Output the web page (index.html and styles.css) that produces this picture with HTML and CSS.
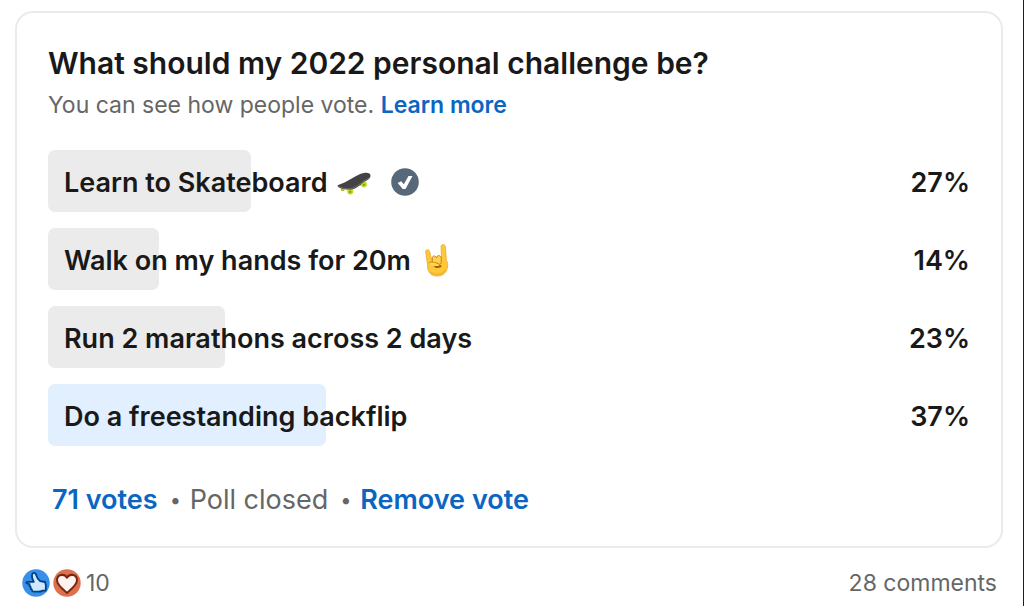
FILE: index.html
```html
<!DOCTYPE html>
<html lang="en">
<head>
  <meta charset="UTF-8">
  <meta name="viewport" content="width=device-width, initial-scale=1.0">
  <title>Poll results</title>
  <link rel="stylesheet" href="styles.css">
</head>
<body>
  <section class="poll">
    <h1>What should my 2022 personal challenge be?</h1>
    <p class="note">You can see how people vote. <a href="#">Learn more</a></p>

    <ul class="options">
      <li class="option">
        <div class="bar" style="width: 22%"></div>
        <span class="label">Learn to Skateboard</span>
        <svg class="emoji" viewBox="0 0 36 36" role="img" aria-label="Skateboard">
          <circle cx="6" cy="25.500" r="2.300" fill="#a9c41c"/>
          <circle cx="14" cy="28" r="3.200" fill="#b9dc20"/>
          <circle cx="24" cy="20" r="2" fill="#a9c41c"/>
          <circle cx="28.500" cy="20.500" r="3.200" fill="#b9dc20"/>
          <path d="M1 21.500c2-1.500 5-2 8-3.500 5-2.500 10-6 15-8.200 4-1.600 8-2.200 10.300-.8 2 1.500 1.200 4.500-.8 6-2 1.400-4 2-6.500 4-4 3.200-7 6.500-12 7-5 .3-10-.7-13-2.200-1.400-.7-1.800-1.700-1-2.300z" fill="#434345"/>
          <path d="M1 22.500c3 2 8.500 3 13 2.600 6-.6 9-4.600 14-7.800 3-2 5.500-2 6.500-4.500" fill="none" stroke="#8f7a6c" stroke-width=".8"/>
          <circle cx="14" cy="28.500" r="1.200" fill="#849c1a"/>
          <circle cx="28.500" cy="21" r="1.200" fill="#849c1a"/>
        </svg>
        <svg class="check" viewBox="0 0 28 28" role="img" aria-label="Your vote">
          <circle cx="14" cy="14" r="13.800" fill="#56687a"/>
          <path d="M6.700 15l3.500-1.800 2.600 3L17.500 8h4L14.500 21h-2.800z" fill="#fff"/>
        </svg>
        <span class="percent">27%</span>
      </li>
      <li class="option">
        <div class="bar" style="width: 12%"></div>
        <span class="label">Walk on my hands for 20m</span>
        <svg class="emoji" viewBox="0 0 36 36" role="img" aria-label="Sign of the horns">
          <path d="M8 23L6 9.500C5.600 6.800 9.600 6.300 10.200 9l2 8.500 10.600-1L22.300 4c-.2-3 4.300-3.200 4.500-.2L28 18.500c1.200 2 1.800 4.500 1 7.500C28 31.500 24 35 18 35c-6.500 0-9.500-4-10-9.500z" fill="#fdc93b" stroke="#eba329" stroke-width=".8"/>
          <path d="M13 19v-3c0-3 4-3 4.500 0 0-3.500 4.800-3.500 5 0v5c0 2-4 2-4.500 0-.5 1.500-4.500 1.500-5-.5z" fill="#fed34d" stroke="#c77d18" stroke-width="1"/>
          <path d="M9 21.500c2-2.200 5-1.500 10 .2 2.800 1 2 4-.8 3.600L14 24.700" fill="#ffd850" stroke="#cb8017" stroke-width="1"/>
          <path d="M16 25.500c3-.2 5 .5 6.500-1.500" fill="none" stroke="#a85a12" stroke-width="2"/>
          <path d="M11 30.500c4 4 12 4 16-2" fill="none" stroke="#f5b12d" stroke-width="1.500"/>
        </svg>
        <span class="percent">14%</span>
      </li>
      <li class="option">
        <div class="bar" style="width: 19.2%"></div>
        <span class="label">Run 2 marathons across 2 days</span>
        <span class="percent">23%</span>
      </li>
      <li class="option">
        <div class="bar winner" style="width: 30.2%"></div>
        <span class="label">Do a freestanding backflip</span>
        <span class="percent">37%</span>
      </li>
    </ul>

    <div class="summary">
      <a href="#">71 votes</a>
      <span class="dot">•</span>
      <span>Poll closed</span>
      <span class="dot">•</span>
      <button type="button">Remove vote</button>
    </div>
  </section>

  <footer class="social">
    <div class="reactions">
      <svg viewBox="0 0 28 28" role="img" aria-label="Like">
        <circle cx="14" cy="14" r="13.700" fill="#378fe9"/>
        <path d="M5.500 12.800h6.300C10.600 10.500 9.600 8 10 6c.3-1.700 1-2.200 2-2.200 1.400 0 1.900 1 2.300 2.600.5 2.200 2 4 3.800 5.700l5 .9c1 2.800 1.200 5.700.5 8.700h-3.400c-1 .8-2.500 1-4 1h-4c-1.700 0-2.500-.8-2.300-2.200-1.200-.5-1.700-1.500-1.300-2.700-1.200-.7-1.500-1.700-1-2.700-3.400 0-4.100-2-2.100-2.300z" fill="#d0e8ff" stroke="#004182" stroke-width="1.800" stroke-linejoin="round"/>
      </svg>
      <svg viewBox="0 0 28 28" role="img" aria-label="Love">
        <circle cx="14" cy="14" r="13.700" fill="#df704d"/>
        <path d="M14 24C9.500 20 4 16 4 11.300c0-5.800 7-7.300 10-2.600 3-4.700 10-3.200 10 2.600C24 16 18.500 20 14 24z" fill="#fff3f0" stroke="#77280f" stroke-width="2" stroke-linejoin="round"/>
      </svg>
      <span class="count">10</span>
    </div>
    <a class="comments" href="#">28 comments</a>
  </footer>
</body>
</html>
```

FILE: styles.css
```css
* {
  box-sizing: border-box;
}
body {
  margin: 0;
  min-height: 100vh;
  padding: 11px 20px 0 15px;
  border-right: 1px solid #1d1d1f;
  background-color: #fff;
  color: #191919;
  font-family: Inter, "Liberation Sans", sans-serif;
}
a, button {
  color: #0a66c2;
  font-weight: 600;
  text-decoration: none;
}
a:hover, button:hover {
  text-decoration: underline;
}
.poll {
  padding: 31px 31px 28px;
  border: 2px solid #ebebeb;
  border-radius: 18px;
}
h1 {
  margin: 0;
  font-size: 30px;
  line-height: 38px;
  font-weight: 600;
}
.note {
  margin: 7px 0 29px;
  color: #666;
  font-size: 23px;
  line-height: 32px;
}
.options {
  display: flex;
  flex-direction: column;
  gap: 16px;
  margin: 0;
  padding: 0;
  list-style: none;
}
.option {
  position: relative;
  display: flex;
  align-items: center;
  height: 62px;
  padding: 2px 0 0 16px;
  font-size: 27px;
  font-weight: 600;
}
/* result bar sits behind the label */
.bar {
  position: absolute;
  top: 0;
  bottom: 0;
  left: 0;
  z-index: -1;
  border-radius: 7px;
  background-color: #ebebeb;
}
.bar.winner {
  background-color: #e1effe;
}
.emoji {
  width: 34px;
  height: 34px;
  margin-left: 9px;
}
.check {
  width: 28px;
  height: 28px;
  margin-left: 20px;
}
.percent {
  margin-left: auto;
}
.summary {
  display: flex;
  align-items: center;
  gap: 12px;
  margin-top: 36px;
  padding-left: 4px;
  color: #666;
  font-size: 27px;
  line-height: 36px;
}
.summary button {
  padding: 0;
  border: none;
  background: none;
  font-family: inherit;
  font-size: 27px;
  line-height: 36px;
  cursor: pointer;
}
.dot {
  width: 8px;
  font-size: 20px;
}
.social {
  display: flex;
  align-items: center;
  justify-content: space-between;
  padding: 19px 6px 0 7px;
  color: #666;
  font-size: 23px;
  line-height: 32px;
}
.reactions {
  display: flex;
  align-items: center;
  gap: 3px;
}
.reactions svg {
  width: 28px;
  height: 28px;
}
.count {
  padding-left: 2px;
}
.comments {
  color: #666;
  font-weight: 400;
}
```
